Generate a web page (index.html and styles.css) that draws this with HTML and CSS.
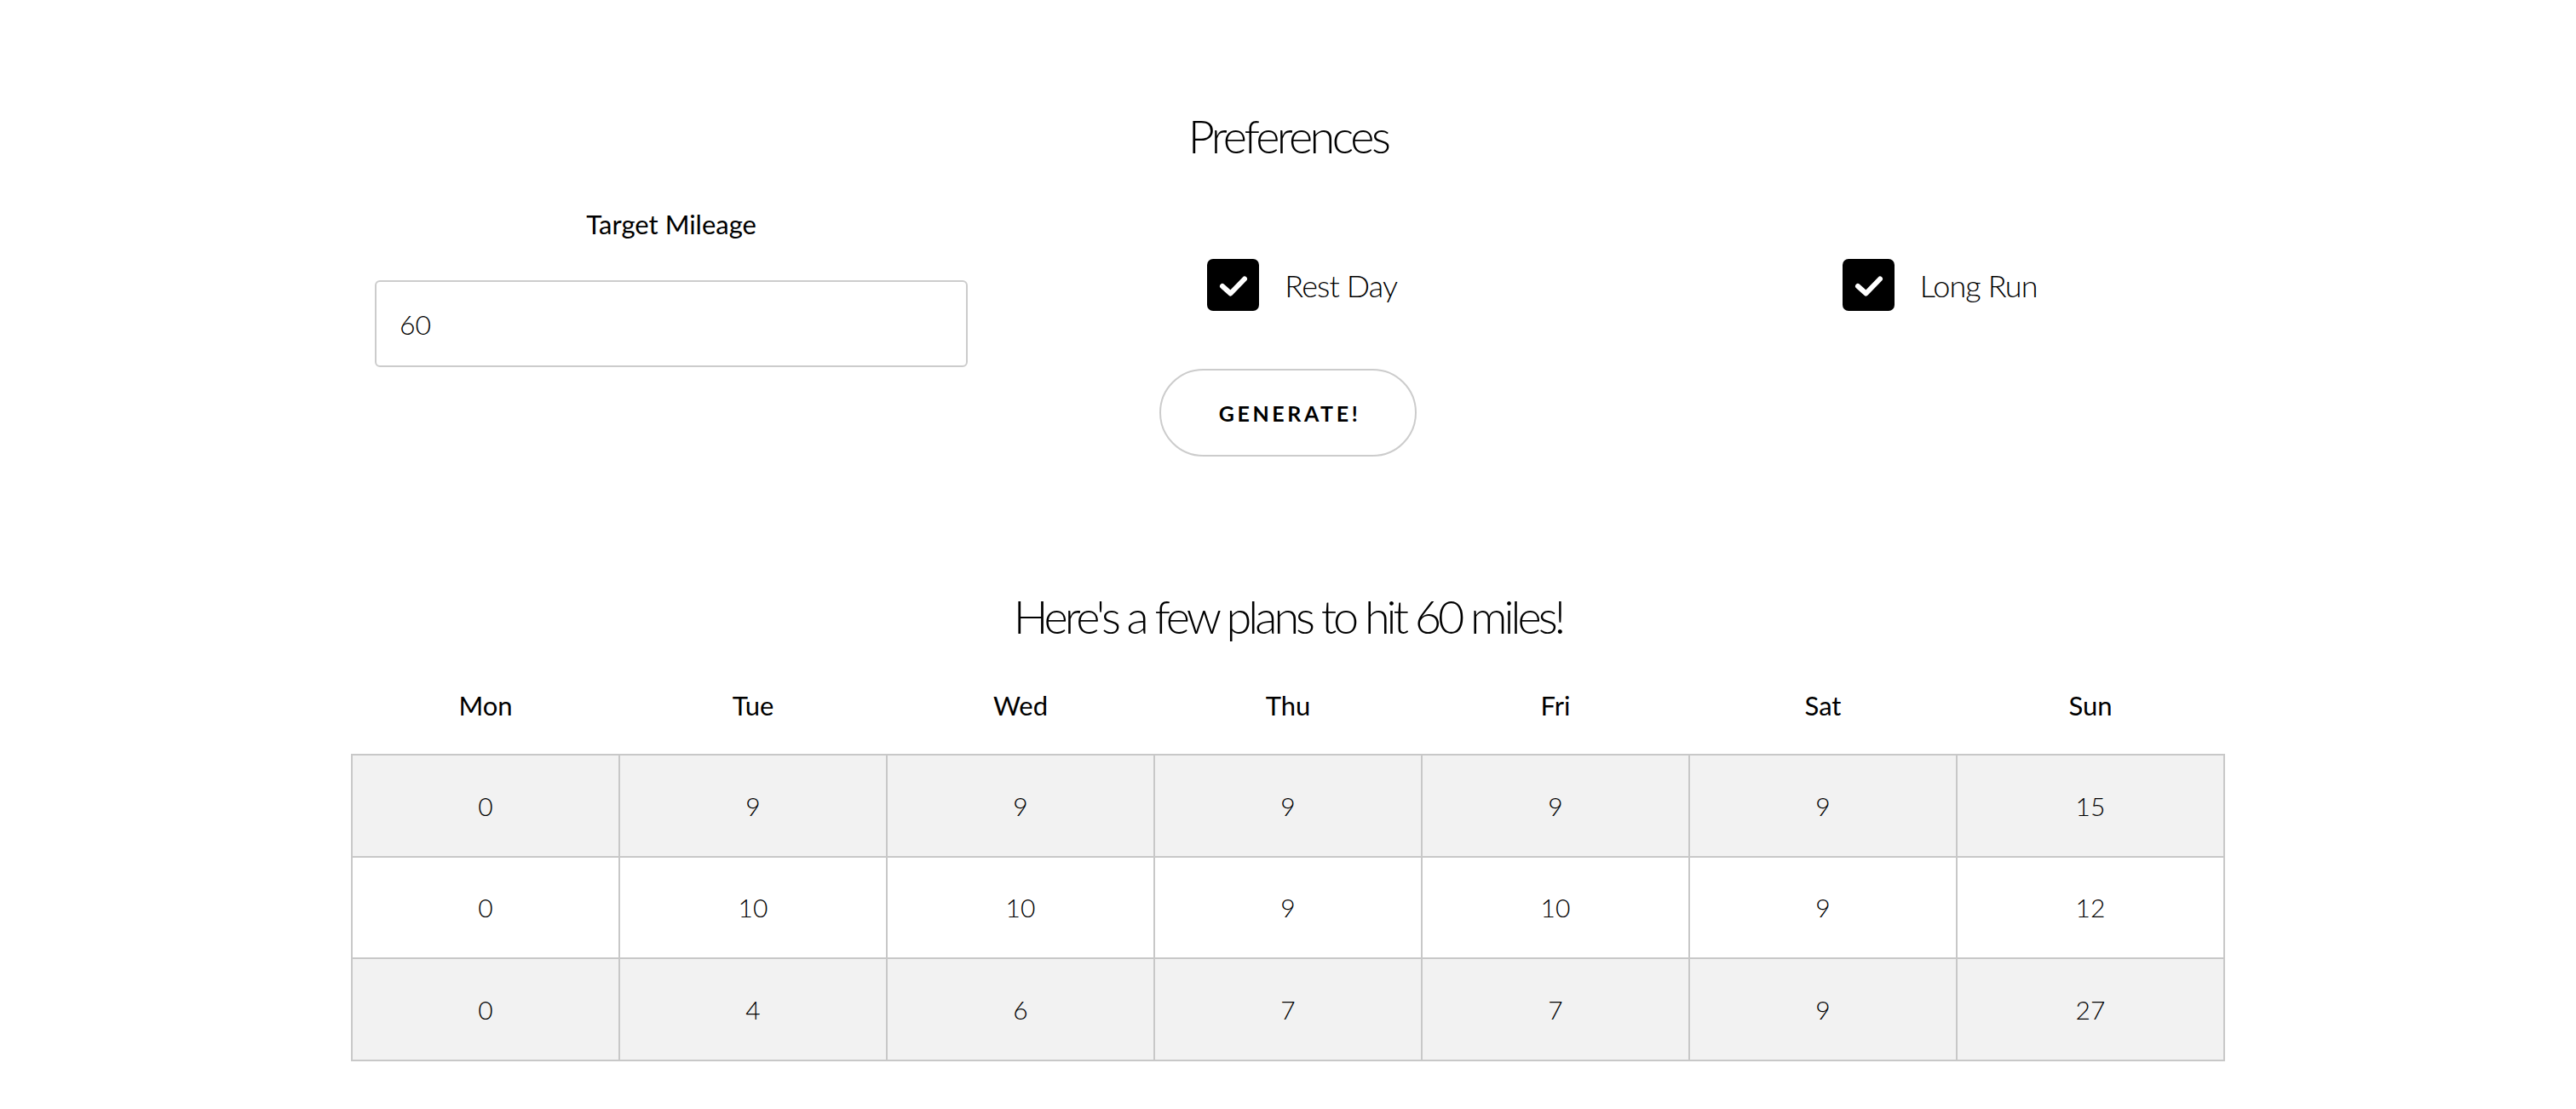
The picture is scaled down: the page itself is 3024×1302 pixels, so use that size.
FILE: index.html
```html
<!DOCTYPE html>
<html lang="en">
<head>
<meta charset="utf-8">
<title>Preferences</title>
<link rel="stylesheet" href="styles.css">
</head>
<body>
<main class="page">
  <h2 class="title title-prefs">Preferences</h2>
  <form class="prefs">
    <div class="col col-mileage">
      <label class="field-label" for="miles">Target Mileage</label>
      <input class="field-input" id="miles" type="text" value="60">
    </div>
    <div class="col col-rest">
      <label class="check">
        <span class="check-box"><svg viewBox="0 0 61 61" width="61" height="61"><polyline points="18,32 27.5,40.5 44,23.5" fill="none" stroke="#fff" stroke-width="6" stroke-linecap="round" stroke-linejoin="round"/></svg></span>
        <span class="check-text">Rest Day</span>
      </label>
    </div>
    <div class="col col-long">
      <label class="check">
        <span class="check-box"><svg viewBox="0 0 61 61" width="61" height="61"><polyline points="18,32 27.5,40.5 44,23.5" fill="none" stroke="#fff" stroke-width="6" stroke-linecap="round" stroke-linejoin="round"/></svg></span>
        <span class="check-text">Long Run</span>
      </label>
    </div>
  </form>
  <div class="actions">
    <button class="btn" type="button">GENERATE!</button>
  </div>
  <h2 class="title title-plans">Here's a few plans to hit 60 miles!</h2>
  <table class="plans">
    <thead>
      <tr><th>Mon</th><th>Tue</th><th>Wed</th><th>Thu</th><th>Fri</th><th>Sat</th><th>Sun</th></tr>
    </thead>
    <tbody>
      <tr><td>0</td><td>9</td><td>9</td><td>9</td><td>9</td><td>9</td><td>15</td></tr>
      <tr><td>0</td><td>10</td><td>10</td><td>9</td><td>10</td><td>9</td><td>12</td></tr>
      <tr><td>0</td><td>4</td><td>6</td><td>7</td><td>7</td><td>9</td><td>27</td></tr>
    </tbody>
  </table>
</main>
</body>
</html>
```
FILE: styles.css
```css
* { box-sizing: border-box; }
html, body { margin: 0; padding: 0; background: #fff; }
body {
  font-family: Lato, "Open Sans", "Liberation Sans", sans-serif;
  color: #000;
}
.page {
  width: 2200px;
  margin: 0 auto;
  padding-top: 133px;
}
.title {
  margin: 0;
  font-size: 54px;
  line-height: 1;
  font-weight: 300;
  text-align: center;
  color: #000;
}
.title-prefs { letter-spacing: -3.5px; }
.prefs {
  display: grid;
  grid-template-columns: repeat(3, 1fr);
  margin-top: 61px;
}
.col-mileage {
  padding: 0 9px 0 28px;
  display: flex;
  flex-direction: column;
  align-items: center;
}
.field-label {
  font-size: 31px;
  line-height: 1;
  font-weight: 400;
  letter-spacing: 0;
}
.field-input {
  margin-top: 50px;
  width: 100%;
  height: 102px;
  border: 2px solid #cccccc;
  border-radius: 6px;
  padding: 0 0 0 27px;
  font-family: inherit;
  font-size: 32px;
  font-weight: 300;
  color: #000;
  background: #fff;
  outline: none;
}
.col-rest { padding-left: 272px; padding-top: 56px; }
.col-long { padding-left: 284px; padding-top: 56px; }
.check {
  display: flex;
  align-items: center;
  gap: 30px;
}
.check-box {
  width: 61px;
  height: 61px;
  border-radius: 7px;
  background: #000;
  display: block;
}
.check-box svg { display: block; }
.check-text {
  font-size: 36px;
  line-height: 1;
  font-weight: 300;
  letter-spacing: -0.9px;
  color: #000;
}
.actions {
  display: flex;
  justify-content: center;
  margin-top: 2px;
}
.btn {
  width: 302px;
  height: 103px;
  border: 2px solid #cccccc;
  border-radius: 52px;
  background: #fff;
  font-family: inherit;
  font-size: 25px;
  font-weight: 700;
  letter-spacing: 3.6px;
  color: #000;
  padding: 0 0 0 4px;
}
.title-plans { margin-top: 161px; letter-spacing: -4px; }
.plans {
  width: 2200px;
  margin-top: 62px;
  border-collapse: collapse;
  table-layout: fixed;
}
.plans th {
  font-size: 31px;
  line-height: 1;
  font-weight: 400;
  padding: 0 0 41px;
  text-align: center;
}
.plans td {
  height: 119.5px;
  border: 2px solid #c8c8c8;
  text-align: center;
  font-size: 30px;
  font-weight: 300;
  color: #000;
  padding: 0;
}
.plans tbody tr:nth-child(odd) td { background: #f2f2f2; }
```
